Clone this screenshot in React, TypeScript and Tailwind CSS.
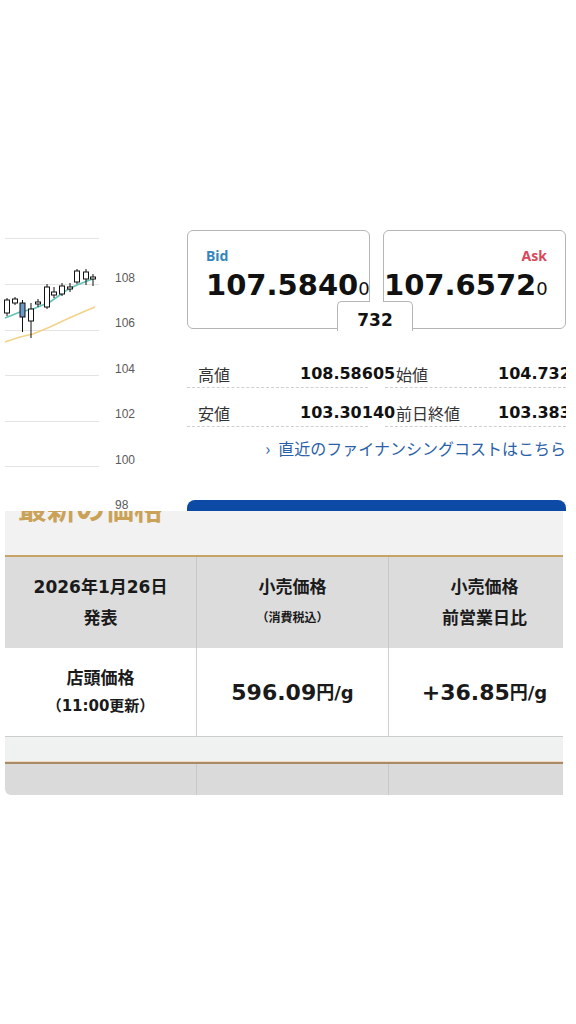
import React from "react";

const candles = [
  { x: 7, bt: 70, bb: 83, wt: 68, wb: 86, fill: "#fff" },
  { x: 15, bt: 69, bb: 73, wt: 67, wb: 75, fill: "#fff" },
  { x: 22.5, bt: 73, bb: 87, wt: 70, wb: 102, fill: "#6d9bc9" },
  { x: 31, bt: 79, bb: 91, wt: 73, wb: 108, fill: "#fff" },
  { x: 38, bt: 72, bb: 74, wt: 69, wb: 77, fill: "#fff" },
  { x: 47, bt: 57, bb: 77, wt: 54, wb: 79, fill: "#fff" },
  { x: 54, bt: 62, bb: 65, wt: 57, wb: 68, fill: "#fff" },
  { x: 62, bt: 56, bb: 64, wt: 53, wb: 66, fill: "#fff" },
  { x: 70, bt: 57, bb: 59, wt: 53, wb: 62, fill: "#fff" },
  { x: 77, bt: 41, bb: 52, wt: 39, wb: 54, fill: "#fff" },
  { x: 86, bt: 42, bb: 49, wt: 39, wb: 55, fill: "#fff" },
  { x: 93, bt: 47, bb: 49, wt: 44, wb: 56, fill: "#fff" },
];

const grid = [8, 54, 100, 145, 191, 236];
const labels = [
  { t: "108", y: 52 },
  { t: "106", y: 97 },
  { t: "104", y: 143 },
  { t: "102", y: 188 },
  { t: "100", y: 234 },
  { t: "98", y: 279 },
];

function Chart() {
  return (
    <svg width="187" height="281" viewBox="0 0 187 281">
      {grid.map((y) => (
        <line key={y} x1="5" x2="99" y1={y + 0.5} y2={y + 0.5} stroke="#e4e4e4" strokeWidth="1" />
      ))}
      {labels.map((l) => (
        <text key={l.t} x="115" y={l.y} fontSize="12" fill="#5a5a5a" fontFamily="Liberation Sans, sans-serif">
          {l.t}
        </text>
      ))}
      <polyline
        points="5,112 20,107 33,104 50,97 67,89 83,82 95,77"
        fill="none"
        stroke="#f1d38c"
        strokeWidth="1.6"
      />
      <polyline
        points="5,88 20,82 33,79 50,72 67,60 77,55 95,48"
        fill="none"
        stroke="#63c3b7"
        strokeWidth="1.6"
      />
      {candles.map((c, i) => (
        <g key={i}>
          <line x1={c.x} x2={c.x} y1={c.wt} y2={c.wb} stroke="#111" strokeWidth="1" />
          <rect
            x={c.x - 2.5}
            y={c.bt}
            width="5"
            height={Math.max(c.bb - c.bt, 1.5)}
            fill={c.fill}
            stroke="#111"
            strokeWidth="1"
          />
        </g>
      ))}
    </svg>
  );
}

const num = "font-['DejaVu_Sans','Noto_Sans_CJK_JP',sans-serif]";
const jp = "font-['Noto_Sans_CJK_JP',sans-serif]";

function StatRow({ label, value }: { label: string; value: string }) {
  return (
    <div className="h-[39px] shrink-0 flex items-end pb-[5px] border-b border-dashed border-[#cfcfcf] whitespace-nowrap">
      <span className={`w-[113px] shrink-0 pl-[11px] text-[16px] leading-[16px] text-[#333] ${jp}`}>{label}</span>
      <span className={`text-[16px] leading-[16px] font-bold text-[#111] ${num}`}>{value}</span>
    </div>
  );
}

export default function App() {
  return (
    <div className="w-[576px] h-[1024px] bg-white overflow-hidden">
      <div className="h-[230px]" />
      <div className="flex h-[281px] overflow-hidden">
        <div className="w-[187px] shrink-0">
          <Chart />
        </div>
        <div className="w-[379px] shrink-0 flex flex-col">
          <div className="relative flex gap-[13px] h-[99px] shrink-0">
            <div className="w-[183px] h-full border border-[#b5b5b5] rounded-[6px] pl-[18px] pt-[17px]">
              <div className="text-[14px] font-bold leading-[16px] text-[#3585bd] font-['Noto_Sans',sans-serif]">Bid</div>
              <div className={`mt-[5px] whitespace-nowrap text-[29px] leading-[32px] text-[#111] ${num}`}>
                <span className="font-bold">107.5840</span>
                <span className="text-[18px]">0</span>
              </div>
            </div>
            <div className="w-[183px] h-full border border-[#b5b5b5] rounded-[6px] pr-[18px] pt-[17px] text-right">
              <div className="text-[14px] font-bold leading-[16px] text-[#d9485a] font-['Noto_Sans',sans-serif]">Ask</div>
              <div className={`mt-[5px] whitespace-nowrap text-[29px] leading-[32px] text-[#111] ${num}`}>
                <span className="font-bold">107.6572</span>
                <span className="text-[18px]">0</span>
              </div>
            </div>
            <div className="absolute left-[150px] top-[71px] w-[76px] h-[30px] flex">
              <div className="w-[33px] h-full bg-white border-l border-t border-[#b5b5b5] rounded-tl-[5px]" />
              <div className="w-[13px] h-full bg-white" />
              <div className="w-[30px] h-full bg-white border-t border-r border-[#b5b5b5] rounded-tr-[5px]" />
            </div>
            <div className={`absolute left-[150px] top-[80px] w-[76px] text-center text-[17px] leading-[20px] font-bold text-[#111] ${num}`}>
              732
            </div>
          </div>

          <div className="mt-[20px] shrink-0 grid grid-cols-2 gap-x-[17px]">
            <div className="flex flex-col">
              <StatRow label="高値" value="108.58605" />
              <StatRow label="安値" value="103.30140" />
            </div>
            <div className="flex flex-col overflow-hidden">
              <StatRow label="始値" value="104.73220" />
              <StatRow label="前日終値" value="103.38320" />
            </div>
          </div>

          <div className={`mt-[9px] h-[24px] shrink-0 flex justify-end items-center whitespace-nowrap text-[16px] leading-[24px] text-[#2b5fa8] ${jp}`}>
            <span className="mr-[8px] text-[17px]">›</span>
            <span>直近のファイナンシングコストはこちら</span>
          </div>

          <div className="mt-[40px] h-[30px] shrink-0 bg-[#0c4aa6] rounded-t-[8px]" />
        </div>
      </div>

      <div className="ml-[5px] w-[558px] overflow-hidden rounded-bl-[6px]">
        <div className={`w-[575px] text-[#1a1a1a] ${num}`}>
          <div className="h-[46px] bg-[#f2f2f2] overflow-hidden border-b-2 border-[#c6a468]">
            <div className={`mt-[-18px] pl-[13px] text-[29px] font-bold leading-[29px] text-[#c9a257] ${jp}`}>最新の価格</div>
          </div>

          <div className="grid grid-cols-[191px_192px_192px] h-[91px] bg-[#dcdcdc] font-bold text-[17px] leading-[31px]">
            <div className="flex flex-col items-center justify-center">
              <div>2026年1月26日</div>
              <div>発表</div>
            </div>
            <div className="flex flex-col items-center justify-center border-l border-[#c6c6c6]">
              <div>小売価格</div>
              <div className="text-[12px]">（消費税込）</div>
            </div>
            <div className="flex flex-col items-center justify-center border-l border-[#c6c6c6]">
              <div>小売価格</div>
              <div>前営業日比</div>
            </div>
          </div>

          <div className="grid grid-cols-[191px_192px_192px] h-[89px] bg-white border-b border-[#cccccc] font-bold">
            <div className="flex flex-col items-center justify-center leading-[28px]">
              <div className="text-[17px]">店頭価格</div>
              <div className="text-[15px]">（11:00更新）</div>
            </div>
            <div className="flex items-center justify-center border-l border-[#d0d0d0] whitespace-nowrap">
              <span className="text-[22px]">596.09</span>
              <span className="text-[18px]">円/g</span>
            </div>
            <div className="flex items-center justify-center border-l border-[#d0d0d0] whitespace-nowrap">
              <span className="text-[22px]">+36.85</span>
              <span className="text-[18px]">円/g</span>
            </div>
          </div>

          <div className="h-[24px] bg-[#f0f2f2]" />
          <div className="h-[1px] bg-[#f0dcc4]" />
          <div className="h-[2px] bg-[#a88b66]" />
          <div className="grid grid-cols-[191px_192px_192px] h-[31px] bg-[#dadada]">
            <div />
            <div className="border-l border-[#c8c8c8]" />
            <div className="border-l border-[#c8c8c8]" />
          </div>
        </div>
      </div>
    </div>
  );
}
